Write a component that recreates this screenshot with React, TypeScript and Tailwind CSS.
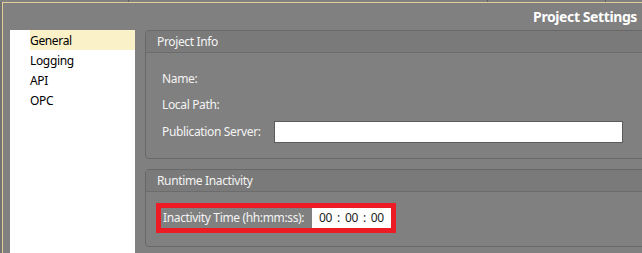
import React from "react";

const NAV = ["General", "Logging", "API", "OPC"];

function GroupBox({ title, className, children }: { title: string; className?: string; children: React.ReactNode }) {
  return (
    <section className={`w-[540px] shrink-0 border border-[#686868] rounded-[4px] flex flex-col ${className ?? ""}`}>
      <div className="h-[22px] shrink-0 border-b border-[#6c6c6c] bg-[#7a7a7a] rounded-t-[3px] pl-[11px] pt-px flex items-center text-[12px] text-[#f4f4f4]">
        {title}
      </div>
      <div className="flex-1">{children}</div>
    </section>
  );
}

export default function App() {
  return (
    <div
      className="w-[642px] h-[253px] overflow-hidden bg-[#808080] flex flex-col select-none tracking-[-0.35px]"
      style={{ fontFamily: '"Noto Sans", "Open Sans", sans-serif' }}
    >
      {/* top tab strip */}
      <div className="h-[2px] shrink-0 flex">
        <div className="w-[128px]" />
        <div className="w-px bg-[#5f5f5f]" />
        <div className="w-[358px]" />
        <div className="w-px bg-[#5f5f5f]" />
        <div className="w-[117px]" />
        <div className="w-px bg-[#5f5f5f]" />
      </div>

      <div className="flex-1 flex min-h-0">
        <div className="w-[2px] shrink-0 bg-[#727272]" />
        <div className="flex-1 flex flex-col border-l border-t border-[#e4cf9c] min-w-0">
          {/* header */}
          <div className="h-[27px] shrink-0 flex items-center justify-end pr-[5px]">
            <h1 className="text-[14px] font-bold text-white leading-none tracking-[-0.4px]">Project Settings</h1>
          </div>

          <div className="flex-1 flex pl-[7px] min-h-0">
            {/* nav list */}
            <nav className="w-[125px] shrink-0 bg-white pl-[20px]">
              {NAV.map((item, i) => (
                <div
                  key={item}
                  className={`h-5 flex items-center pt-[2px] text-[12px] text-black ${i === 0 ? "bg-[#fbf1c9]" : ""}`}
                >
                  {item}
                </div>
              ))}
            </nav>

            {/* settings */}
            <div className="ml-[10px] flex flex-col gap-[10px]">
              <GroupBox title="Project Info" className="h-[129px]">
                <div className="pl-[16px] pt-[16px] text-[12px] text-[#f4f4f4]">
                  <div className="h-5 flex items-center">Name:</div>
                  <div className="h-5 mt-[6px] flex items-center">Local Path:</div>
                  <div className="mt-[6px] flex items-center">
                    <span className="w-[112px] shrink-0">Publication Server:</span>
                    <div className="w-[349px] h-[22px] bg-white border border-[#5c5c5c]" />
                  </div>
                </div>
              </GroupBox>

              <GroupBox title="Runtime Inactivity" className="h-[78px]">
                <div className="pl-[10px] pt-[11px]">
                  <div className="w-[240px] h-[30px] border-[5px] border-[#ed1c24] flex">
                    <span className="w-[151px] shrink-0 pl-[2px] flex items-center text-[12px] text-[#f4f4f4] whitespace-nowrap">
                      Inactivity Time (hh:mm:ss):
                    </span>
                    <div className="flex-1 bg-white flex items-center pl-[7px] text-[12px] text-[#1c1c1c] gap-[5px]">
                      <span>00</span>
                      <span>:</span>
                      <span>00</span>
                      <span>:</span>
                      <span>00</span>
                    </div>
                  </div>
                </div>
              </GroupBox>
            </div>
          </div>
        </div>
      </div>
    </div>
  );
}
